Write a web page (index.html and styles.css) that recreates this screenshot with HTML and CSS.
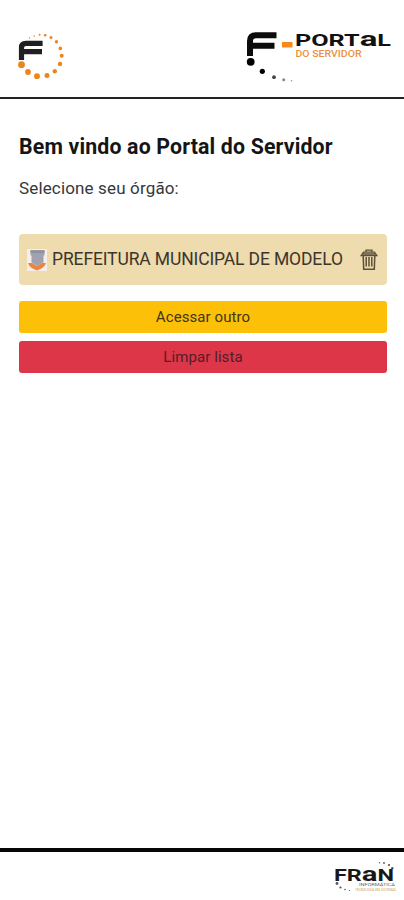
FILE: index.html
```html
<!DOCTYPE html>
<html lang="pt-BR">
<head>
<meta charset="utf-8">
<title>Portal do Servidor</title>
<link rel="stylesheet" href="styles.css">
</head>
<body>
<header class="header">
  <svg class="mark" viewBox="16 30 50 52" width="50" height="52" aria-hidden="true">
    <path d="M21.5 60V47.5Q21.5 43.4 26 43.4H42.6M22 51.6H42" fill="none" stroke="#202024" stroke-width="5.2"/>
    <g fill="#ee851c">
      <circle cx="21.5" cy="64.7" r="3.4"/><circle cx="28" cy="72" r="2.9"/><circle cx="37" cy="76.2" r="2.9"/>
      <circle cx="47" cy="75.6" r="2.5"/><circle cx="54.8" cy="71.3" r="2.2"/><circle cx="60" cy="64" r="2.2"/>
      <circle cx="61.7" cy="55.8" r="2"/><circle cx="60.3" cy="48.4" r="1.8"/><circle cx="56.5" cy="41.8" r="1.7"/>
      <circle cx="51" cy="37.4" r="1.5"/><circle cx="45.2" cy="35.2" r="1.3"/><circle cx="39.6" cy="34.8" r="1"/>
      <circle cx="34.2" cy="36" r=".8"/><circle cx="29.5" cy="38" r=".7"/>
    </g>
  </svg>
  <svg class="brand" viewBox="244 28 150 56" width="150" height="56">
    <path d="M250 56V41Q250 35.2 256 35.2H276.5M250 45.8H274.5" fill="none" stroke="#0c0c0c" stroke-width="6"/>
    <circle cx="250.7" cy="61.8" r="3.9"/><circle cx="262.3" cy="71.3" r="2.6"/>
    <circle cx="274" cy="77.2" r="1.9" fill="#444"/><circle cx="283.7" cy="79.8" r="1.5" fill="#888"/><circle cx="291.5" cy="80.7" r=".8" fill="#999"/>
    <path d="M282 42H292.5V47.5H282Z" fill="#f58a1f"/>
    <text class="wordmark" x="295" y="46.2" textLength="96" lengthAdjust="spacingAndGlyphs">PORT<tspan class="wordmark-a">a</tspan>L</text>
    <text class="tagline" x="295.5" y="57" textLength="66" lengthAdjust="spacingAndGlyphs">DO SERVIDOR</text>
  </svg>
</header>
<main class="main">
  <h1 class="title">Bem vindo ao Portal do Servidor</h1>
  <p class="prompt">Selecione seu órgão:</p>
  <div class="entity">
    <svg class="crest" viewBox="0 0 20 22" width="20" height="22" aria-hidden="true">
      <path d="M0 0H20V22H0Z" fill="#f5efe7"/>
      <path d="M1 14L5 14L10 17L15 14L19 14Q18 18.5 10 21.5Q2 18.5 1 14Z" fill="#eb8543"/>
      <path d="M3.5 1H17.5V6L16.5 7V13.5L10 17L4.5 13.5V7L3.5 6Z" fill="#a0a3ae"/>
      <path d="M3.5 1.5H17.5V4H3.5Z" fill="#8c929f"/>
    </svg>
    <span class="entity-name">PREFEITURA MUNICIPAL DE MODELO</span>
    <svg class="trash" viewBox="0 0 18 22" width="18" height="22" fill="none" stroke="#5c503b" aria-hidden="true">
      <path d="M6 3V1.2H12V3M1.2 6.5L3.5 3.2H14.5L16.8 6.5ZM3 4.8H15" stroke-width="1.3"/>
      <path d="M3.2 7L3.7 20.3H14.3L14.8 7" stroke-width="1.5"/>
      <path d="M6.2 8V17.5M9 8V17.5M11.8 8V17.5" stroke-width="1.5"/>
    </svg>
  </div>
  <button class="button button-other">Acessar outro</button>
  <button class="button button-clear">Limpar lista</button>
</main>
<footer class="footer">
  <svg viewBox="332 858 68 36" width="68" height="36">
    <text class="company" x="334" y="881.2" textLength="60" lengthAdjust="spacingAndGlyphs">FR<tspan class="company-a">a</tspan>N</text>
    <g fill="#555">
      <circle cx="337" cy="883.5" r="1.4"/><circle cx="340.5" cy="887.5" r="1.1"/><circle cx="345" cy="889.5" r=".8"/><circle cx="349.5" cy="890.5" r=".6"/>
      <circle cx="379.5" cy="862.7" r=".7"/><circle cx="384" cy="863" r=".9"/><circle cx="389" cy="865" r="1.1"/><circle cx="392.3" cy="868.2" r="1.2"/>
    </g>
    <text class="company-sub" x="359" y="886.3" textLength="36" lengthAdjust="spacingAndGlyphs">INFORMÁTICA</text>
    <text class="company-note" x="355" y="891.3" textLength="41" lengthAdjust="spacingAndGlyphs">TECNOLOGIA EM SISTEMAS</text>
  </svg>
</footer>
</body>
</html>
```
FILE: styles.css
```css
* { box-sizing: border-box; }
body {
  margin: 0;
  height: 900px;
  display: flex;
  flex-direction: column;
  background: #fff;
  color: #212529;
  font-family: Roboto, sans-serif;
}
.header {
  height: 99px;
  padding: 28px 10px 0 16px;
  display: flex;
  justify-content: space-between;
  align-items: flex-start;
  border-bottom: 2px solid #202226;
}
.mark { margin-top: 2px; }
.wordmark { font: 700 16px Roboto, sans-serif; fill: #111; }
.wordmark-a { font-size: 21px; }
.tagline { font: 500 8.5px Roboto, sans-serif; fill: #ec9140; }
.main {
  flex: 1;
  padding: 35px 17px 0 19px;
  display: flex;
  flex-direction: column;
}
.title {
  margin: 0;
  font-size: 21.3px;
  line-height: 26px;
  letter-spacing: .16px;
  font-weight: 700;
  color: #151515;
  white-space: nowrap;
}
.prompt {
  margin: 16px 0 34px;
  font-size: 17px;
  line-height: 24px;
  letter-spacing: .15px;
  color: #35383b;
}
.entity {
  height: 51px;
  padding: 0 9px 0 8px;
  display: flex;
  align-items: center;
  background: #eedbae;
  border-radius: 4px;
}
.entity-name {
  margin: -2px 0 0 5px;
  flex: 1;
  font-size: 17.5px;
  letter-spacing: -.13px;
  white-space: nowrap;
  color: #3b352c;
}
.button {
  height: 32px;
  padding: 0;
  border: 0;
  border-radius: 3px;
  font: 400 15px/32px Roboto, sans-serif;
  letter-spacing: .08px;
}
.button-other { margin-top: 16px; background: #fdc008; color: #41351a; }
.button-clear { margin-top: 8px; background: #dc3648; color: #521f28; }
.footer {
  height: 52px;
  padding: 6px 4px 0;
  display: flex;
  justify-content: flex-end;
  border-top: 4px solid #060606;
}
.company { font: 700 16px Roboto, sans-serif; fill: #181818; }
.company-a { font-size: 20px; }
.company-sub { font: 400 3.6px Roboto, sans-serif; fill: #666; }
.company-note { font: 400 3.5px Roboto, sans-serif; fill: #cf9f50; }
```
